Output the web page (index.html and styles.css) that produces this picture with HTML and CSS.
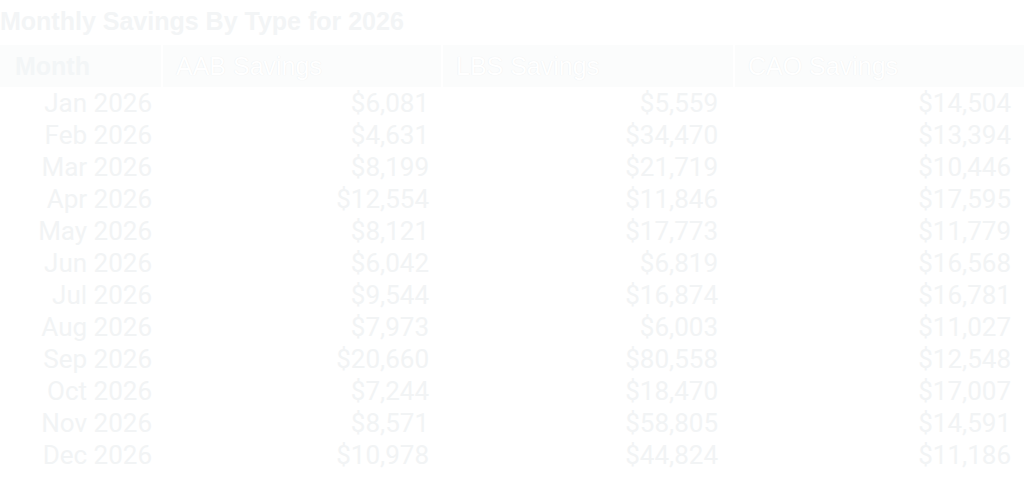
FILE: index.html
```html
<!DOCTYPE html>
<html lang="en">
<head>
<meta charset="utf-8">
<title>Monthly Savings By Type for 2026</title>
<link rel="stylesheet" href="styles.css">
</head>
<body>
<h1 class="title">Monthly Savings By Type for 2026</h1>
<table class="savings">
  <colgroup>
    <col class="c-month"><col class="c-aab"><col class="c-lbs"><col class="c-cao">
  </colgroup>
  <thead>
    <tr>
      <th class="th-month">Month</th>
      <th class="th-type">AAB Savings</th>
      <th class="th-type">LBS Savings</th>
      <th class="th-type">CAO Savings</th>
    </tr>
  </thead>
  <tbody>
    <tr><td>Jan 2026</td><td>$6,081</td><td>$5,559</td><td>$14,504</td></tr>
    <tr><td>Feb 2026</td><td>$4,631</td><td>$34,470</td><td>$13,394</td></tr>
    <tr><td>Mar 2026</td><td>$8,199</td><td>$21,719</td><td>$10,446</td></tr>
    <tr><td>Apr 2026</td><td>$12,554</td><td>$11,846</td><td>$17,595</td></tr>
    <tr><td>May 2026</td><td>$8,121</td><td>$17,773</td><td>$11,779</td></tr>
    <tr><td>Jun 2026</td><td>$6,042</td><td>$6,819</td><td>$16,568</td></tr>
    <tr><td>Jul 2026</td><td>$9,544</td><td>$16,874</td><td>$16,781</td></tr>
    <tr><td>Aug 2026</td><td>$7,973</td><td>$6,003</td><td>$11,027</td></tr>
    <tr><td>Sep 2026</td><td>$20,660</td><td>$80,558</td><td>$12,548</td></tr>
    <tr><td>Oct 2026</td><td>$7,244</td><td>$18,470</td><td>$17,007</td></tr>
    <tr><td>Nov 2026</td><td>$8,571</td><td>$58,805</td><td>$14,591</td></tr>
    <tr><td>Dec 2026</td><td>$10,978</td><td>$44,824</td><td>$11,186</td></tr>
  </tbody>
</table>
</body>
</html>
```
FILE: styles.css
```css
html, body {
  margin: 0;
  padding: 0;
  background: #ffffff;
}

.title {
  margin: 0;
  padding-top: 6px;
  font-family: "Liberation Sans", Arial, sans-serif;
  font-weight: bold;
  font-size: 25px;
  line-height: 30px;
  color: #f3f5f6;
}

.savings {
  margin-top: 9px;
  width: 1024px;
  border-collapse: collapse;
  table-layout: fixed;
}

.c-month { width: 162px; }
.c-aab { width: 280px; }
.c-lbs { width: 292px; }
.c-cao { width: 290px; }

.savings th {
  font-family: "Liberation Sans", Arial, sans-serif;
  font-size: 25px;
  line-height: 28px;
  padding: 7px 13px;
  text-align: left;
  background: #fbfcfc;
  border-left: 2px solid #ffffff;
}

.savings th:first-child {
  border-left: none;
  padding-left: 15px;
}

.th-month {
  font-weight: bold;
  color: #f3f6f7;
  background: #f9fbfb;
}

.th-type {
  font-weight: normal;
  color: #ffffff;
  text-shadow: 0 0 1px #e6e9eb;
}

.savings td {
  font-family: Roboto, "Liberation Sans", sans-serif;
  font-weight: normal;
  font-size: 26px;
  line-height: 32px;
  height: 32px;
  padding: 0 13px 0 0;
  text-align: right;
  color: #f2f4f5;
}

.savings td:first-child { padding-right: 10px; }
.savings td:nth-child(3) { padding-right: 16px; }
```
